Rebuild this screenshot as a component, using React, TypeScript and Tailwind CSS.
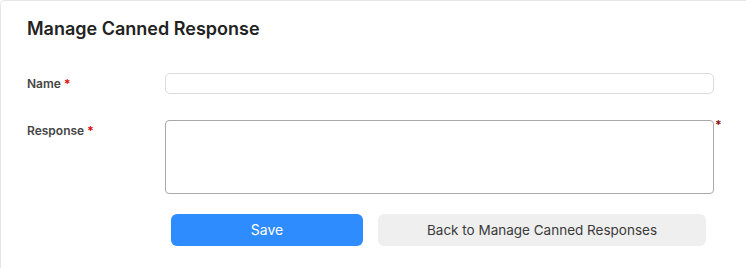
export default function App() {
  return (
    <div className="min-h-screen bg-white font-['Inter','Liberation_Sans',sans-serif]">
      <div className="h-[268px] border-l border-t border-[#e6e6e6] rounded-tl-[5px] pl-[26px] pt-[16px]">
        <h1 className="text-[18px] leading-[24px] font-semibold text-[#222]">Manage Canned Response</h1>

        <div className="mt-[32px] flex items-center">
          <label className="w-[138px] text-[12px] leading-[16px] font-semibold text-[#454545]">
            Name <span className="text-[#e00000]">*</span>
          </label>
          <input
            type="text"
            className="w-[549px] h-[21px] rounded-[5px] border border-[#dcdcdc] bg-white outline-none"
          />
        </div>

        <div className="mt-[26px] flex items-start">
          <label className="w-[138px] pt-[3px] text-[12px] leading-[16px] font-semibold text-[#454545]">
            Response <span className="text-[#e00000]">*</span>
          </label>
          <textarea className="w-[549px] h-[74px] rounded-[4px] border border-[#a9a9a9] bg-white outline-none resize-none" />
          <span className="ml-[1px] -mt-[2px] text-[12px] leading-[14px] font-bold text-[#8b1010]">*</span>
        </div>

        <div className="mt-[20px] ml-[144px] flex gap-[15px]">
          <button className="w-[192px] h-[32px] rounded-[6px] bg-[#2f8cff] text-white text-[14px] leading-[20px]">Save</button>
          <button className="w-[328px] h-[32px] rounded-[6px] bg-[#efefef] text-[#3a3a3a] text-[13.5px] leading-[20px]">
            Back to Manage Canned Responses
          </button>
        </div>
      </div>
    </div>
  )
}
